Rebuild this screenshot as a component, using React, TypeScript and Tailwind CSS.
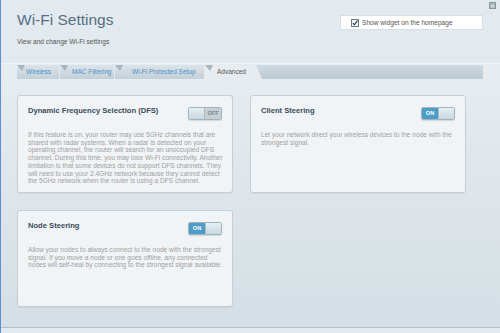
import React from "react";

const Toggle = ({ on }: { on: boolean }) => (
  <div className="flex w-[34px] h-[13px] border border-[#a3b3bd] rounded-[2px] overflow-hidden shadow-[0_1px_1px_rgba(0,0,0,0.12)]">
    {on ? (
      <>
        <div className="w-[17px] h-full bg-[#4c9cc7] text-white text-[5.6px] font-bold flex items-center justify-center">
          ON
        </div>
        <div className="w-[17px] h-full bg-gradient-to-b from-[#e6f0f3] to-[#c6d8df] border-l border-[#a9b9c2]" />
      </>
    ) : (
      <>
        <div className="w-[17px] h-full bg-gradient-to-b from-[#e6f0f3] to-[#c6d8df] border-r border-[#a9b9c2]" />
        <div className="w-[17px] h-full bg-[#c7cfd4] text-[#7e8a92] text-[5.6px] font-bold flex items-center justify-center">
          OFF
        </div>
      </>
    )}
  </div>
);

const Card = ({
  title,
  on,
  lines,
}: {
  title: string;
  on: boolean;
  lines: string[];
}) => (
  <div className="h-full bg-[#f1f4f7] border border-[#c6cfd6] rounded-[3px] pt-[10px] px-[10px] shadow-[0_1px_1px_rgba(0,0,0,0.05)]">
    <div className="flex justify-between items-start">
      <div className="text-[7.6px] leading-[9px] font-bold text-[#3b4b59]">{title}</div>
      <div className="mt-[1px]">
        <Toggle on={on} />
      </div>
    </div>
    <div className="mt-[11px] text-[6.6px] leading-[7.7px] text-[#a0a0a0]">
      {lines.map((l, i) => (
        <div key={i} className="whitespace-nowrap">
          {l}
        </div>
      ))}
    </div>
  </div>
);

const tabs = [
  { label: "Wireless", w: "w-[43px]", pl: "pl-[9px]" },
  { label: "MAC Filtering", w: "w-[55px]", pl: "pl-[12px]" },
  { label: "Wi-Fi Protected Setup", w: "w-[90px]", pl: "pl-[17px]" },
];

const Fold = () => (
  <svg className="absolute left-0 top-0" width="8" height="6" viewBox="0 0 8 6">
    <polygon points="0,0 8,0 5,6" fill="#a7b5be" />
  </svg>
);

export default function App() {
  return (
    <div
      className="relative w-[500px] h-[333px] overflow-hidden border-l-[1.5px] border-[#5c8fd6] bg-[#e2eaef]"
      style={{ fontFamily: '"Liberation Sans", Arial, sans-serif' }}
    >
      {/* close */}
      <div className="absolute right-[4px] top-[2px] w-[7px] h-[7px] bg-[#a9b4bb] border border-[#8c979e] flex items-center justify-center text-white text-[6px] leading-none">
        ×
      </div>

      {/* header */}
      <div className="h-[63px] flex justify-between pl-[16px] pr-[17px]">
        <div className="pt-[11px]">
          <div className="text-[15.5px] leading-[18px] text-[#566f84]">Wi-Fi Settings</div>
          <div className="mt-[9px] text-[6.6px] leading-[8px] text-[#555]">
            View and change Wi-Fi settings
          </div>
        </div>
        <div className="mt-[15px] w-[143px] h-[15px] bg-white border border-[#d6dfe5] flex items-center pl-[10px] gap-[3px]">
          <div className="w-[8px] h-[8px] border border-[#6b7b88] bg-[#eef3f7] flex items-center justify-center">
            <svg width="8" height="8" viewBox="0 0 8 8">
              <path d="M1.2 4.2 L3.2 6.4 L7.4 0.8" stroke="#1f2d3a" strokeWidth="1.4" fill="none" />
            </svg>
          </div>
          <span className="text-[6.6px] text-[#555]">Show widget on the homepage</span>
        </div>
      </div>

      {/* tabs */}
      <div className="border-t border-[#f3f6f8] bg-[#e6ecf0] pt-[1px]">
        <div className="flex h-[14px] pl-[16px] pr-[17px]">
          {tabs.map((t) => (
            <div
              key={t.label}
              className={`relative ${t.w} ${t.pl} h-full bg-gradient-to-b from-[#dbe4e9] to-[#c3d0d8] border-r border-[#e3e9ed] flex items-center text-[6.5px] text-[#4c8fc6]`}
            >
              <Fold />
              {t.label}
            </div>
          ))}
          <div className="relative w-[45px] h-full pl-[12px] flex items-center text-[6.5px] text-[#555]">
            <Fold />
            Advanced
          </div>
          <div className="flex-1 h-full bg-gradient-to-b from-[#cfdae1] to-[#bccad3] [clip-path:polygon(5px_0,100%_0,100%_100%,11px_100%)] ml-[1px]" />
        </div>

        {/* content */}
        <div className="h-[249px] bg-gradient-to-b from-[#e6ecf0] to-[#d4dee4] pt-[16px] pl-[16px] pr-[32px] border-b border-[#b3c0c8]">
          <div className="grid grid-cols-[216px_216px] grid-rows-[98px_97px] gap-x-[17px] gap-y-[17px]">
            <Card
              title="Dynamic Frequency Selection (DFS)"
              on={false}
              lines={[
                "If this feature is on, your router may use 5GHz channels that are",
                "shared with radar systems. When a radar is detected on your",
                "operating channel, the router will search for an unoccupied DFS",
                "channel. During this time, you may lose Wi-Fi connectivity. Another",
                "limitation is that some devices do not support DFS channels. They",
                "will need to use your 2.4GHz network because they cannot detect",
                "the 5GHz network when the router is using a DFS channel.",
              ]}
            />
            <Card
              title="Client Steering"
              on={true}
              lines={[
                "Let your network direct your wireless devices to the node with the",
                "strongest signal.",
              ]}
            />
            <Card
              title="Node Steering"
              on={true}
              lines={[
                "Allow your nodes to always connect to the node with the strongest",
                "signal. If you move a node or one goes offline, any connected",
                "nodes will self-heal by connecting to the strongest signal available.",
              ]}
            />
          </div>
        </div>
      </div>
    </div>
  );
}
